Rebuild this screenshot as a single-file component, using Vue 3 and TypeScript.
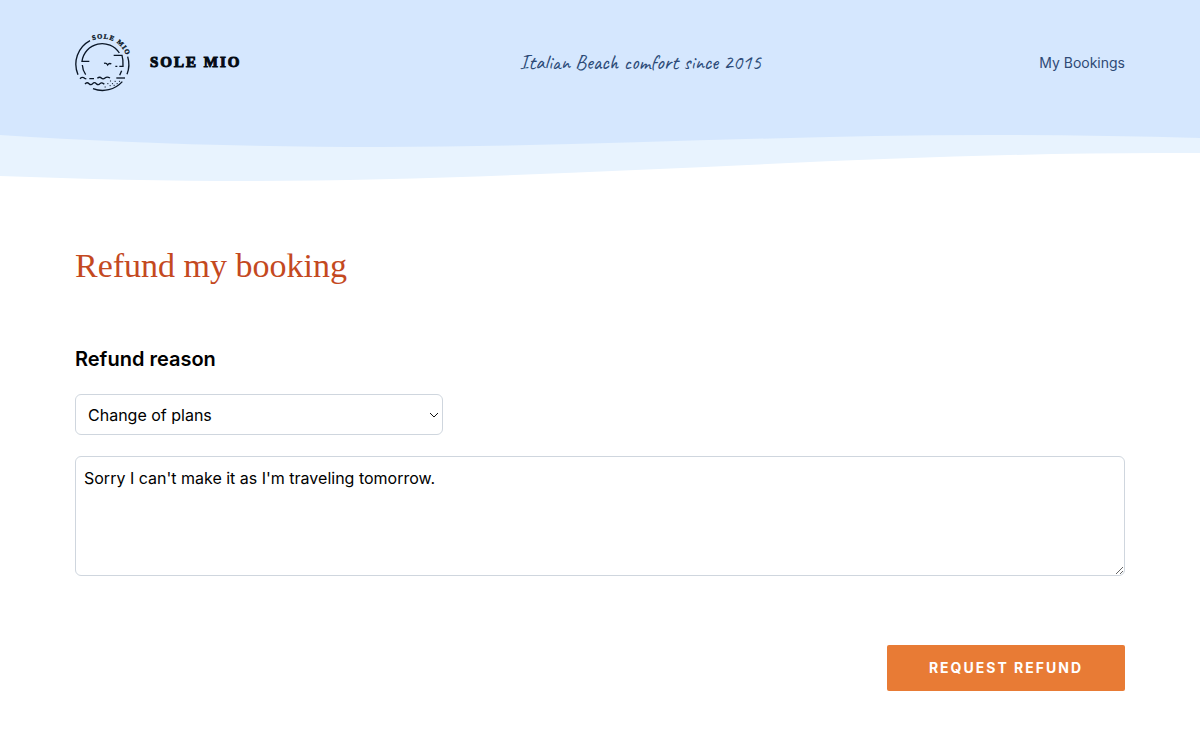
<script setup lang="ts">
import { ref } from 'vue'

const reasons: string[] = ['Change of plans', 'Bad weather', 'Booked by mistake', 'Other']
const reason = ref<string>(reasons[0])
const details = ref<string>("Sorry I can't make it as I'm traveling tomorrow.")
</script>

<template>
  <div class="page">
    <header class="header">
      <div class="bar">
        <a class="brand" href="#">
          <svg class="emblem" viewBox="31 30 174 180" aria-hidden="true">
            <defs>
              <path id="emblem-arc" d="M50 83 A76 76 0 0 1 189 126" />
            </defs>
            <text class="emblem-text"><textPath href="#emblem-arc" startOffset="45">SOLE MIO</textPath></text>
            <g class="lines">
              <path d="M76 56 A80 80 0 0 0 40 158" />
              <path d="M189 104 A80 80 0 0 1 187 157" />
              <path d="M85 200 A80 80 0 0 0 173 179" />
              <path d="M74 118 H52 A61 61 0 0 1 164 93" />
              <path d="M53 129 Q54 146 63 158" />
              <path d="M147 100 H172 Q176 113 175 133 H164 M158 133 H152" />
              <path d="M171 146 L165 160" />
              <path d="M118 124 Q125 122 129 129 Q133 122 140 126" />
              <path d="M46 170 Q53 163 60 169 L65 171 M74 170 H88" />
              <path d="M98 169 Q105 163 110 168 T121 168 T136 168" />
              <path d="M155 168 H181" />
              <path d="M61 186 Q67 179 73 185 T84 185 T95 185 T106 185 T119 187" />
              <path class="sand" d="M137 177 h1 M151 178 h1 M164 178 h1 M129 185 h1 M143 185 h1 M157 185 h1 M121 195 h1 M136 191 h1 M148 190 h1" />
            </g>
          </svg>
          <span class="name">SOLE MIO</span>
        </a>
        <p class="tagline">Italian Beach comfort since 2015</p>
        <nav><a class="link" href="#">My Bookings</a></nav>
      </div>
      <svg class="wave" viewBox="0 0 1200 60" preserveAspectRatio="none" aria-hidden="true">
        <path fill="#e8f3fe" d="M0 0 V52 C80 55 170 57 250 57 C540 57 860 29 1160 29 H1200 V0 Z" />
        <path fill="#d5e7fe" d="M0 0 V11 C120 19 250 23 380 23 C580 23 780 11 990 11 C1060 11 1130 12 1200 14 V0 Z" />
      </svg>
    </header>

    <main class="content">
      <h1 class="title">Refund my booking</h1>
      <form @submit.prevent>
        <label class="label" for="reason">Refund reason</label>
        <div class="select-wrap">
          <select id="reason" v-model="reason" class="field select">
            <option v-for="item in reasons" :key="item" :value="item">{{ item }}</option>
          </select>
          <svg class="chevron" viewBox="0 0 10 6" aria-hidden="true"><path d="M1 1 L5 5 L9 1" /></svg>
        </div>
        <textarea v-model="details" class="field details" aria-label="Refund details"></textarea>
        <div class="actions">
          <button class="submit" type="submit">REQUEST REFUND</button>
        </div>
      </form>
    </main>
  </div>
</template>

<style>
body {
  margin: 0;
  background: #fff;
}
</style>

<style scoped>
.page {
  font-family: Inter, "Liberation Sans", sans-serif;
  font-size: 16px;
  color: #000;
}
.bar {
  display: flex;
  align-items: center;
  justify-content: space-between;
  min-height: 124px;
  padding: 0 75px;
  background: #d5e7fe;
}
.brand {
  display: flex;
  align-items: center;
  gap: 17px;
  color: #040b14;
  text-decoration: none;
}
.emblem {
  width: 58px;
  height: 60px;
}
.emblem-text {
  font: 700 20px "Liberation Serif", serif;
  letter-spacing: 3px;
  fill: #0a1626;
  stroke: #0a1626;
}
.lines {
  fill: none;
  stroke: #0a1626;
  stroke-width: 4;
}
.sand {
  stroke-width: 3;
  stroke-linecap: round;
}
.name {
  font: 700 15px/24px "Liberation Serif", serif;
  letter-spacing: 2px;
  -webkit-text-stroke: 1px #040b14;
}
.tagline {
  margin: 0;
  font: 500 21px/24px Caveat, cursive;
  color: #2b4a77;
}
.link {
  font-size: 14px;
  color: #2f4a75;
  text-decoration: none;
}
.wave {
  display: block;
  width: 100%;
  height: 60px;
}
.content {
  padding: 60px 75px 54px;
}
.title {
  margin: 0 0 58px;
  font: 400 34px/44px "Liberation Serif", serif;
  color: #c4491f;
}
.label {
  display: block;
  margin-bottom: 22px;
  font-size: 20px;
  font-weight: 600;
  line-height: 26px;
}
.field {
  box-sizing: border-box;
  display: block;
  width: 100%;
  border: 1px solid #cfd6de;
  border-radius: 6px;
  background: #fff;
  color: #000;
  font: 16px/24px Inter, "Liberation Sans", sans-serif;
}
.select-wrap {
  position: relative;
  width: 35%;
  margin-bottom: 21px;
}
.select {
  height: 41px;
  padding: 0 24px 0 12px;
  appearance: none;
}
.chevron {
  position: absolute;
  top: 50%;
  right: 4px;
  width: 10px;
  height: 6px;
  margin-top: -3px;
  fill: none;
  stroke: #111;
  pointer-events: none;
}
.details {
  height: 120px;
  padding: 9px 8px;
  resize: vertical;
}
.actions {
  display: flex;
  justify-content: flex-end;
  margin-top: 69px;
}
.submit {
  padding: 11px 42px;
  border: 0;
  border-radius: 2px;
  background: #e87b35;
  color: #fff;
  font: 700 14px/24px Inter, "Liberation Sans", sans-serif;
  letter-spacing: 2px;
}
</style>
